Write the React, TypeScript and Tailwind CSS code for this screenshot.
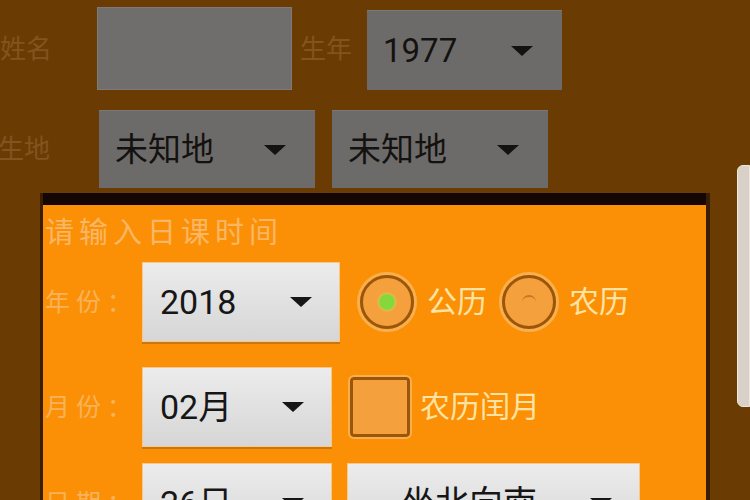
import React from 'react';

const font = { fontFamily: "Roboto, 'Noto Sans CJK SC', sans-serif" };

const Arrow: React.FC<{ className?: string }> = ({ className }) => (
  <svg width="24" height="12" viewBox="0 0 24 12" className={className}>
    <polygon points="1,1 23,1 12,11" fill="currentColor" />
  </svg>
);

const DimSelect: React.FC<{ value: string; className: string }> = ({ value, className }) => (
  <div className={`flex items-center justify-between bg-[#6d6b69] border-t border-[#7b7774] pl-[16px] pr-[28px] text-[#141210] ${className}`}>
    <span className="text-[33px] leading-none">{value}</span>
    <Arrow />
  </div>
);

const Select: React.FC<{ value: string; className: string; center?: boolean }> = ({ value, className, center }) => (
  <div
    className={`flex items-center justify-between bg-gradient-to-b from-[#ececec] to-[#d6d6d6] border border-[#f7c88a] shadow-[0_2px_0_#c9760c] pl-[17px] pr-[26px] text-[#161616] ${className}`}
  >
    <span className={`text-[34px] leading-none ${center ? 'ml-[36px]' : ''}`}>{value}</span>
    <Arrow />
  </div>
);

const Radio: React.FC<{ checked?: boolean }> = ({ checked }) => (
  <div className="w-[60px] h-[60px] rounded-full border-[3px] border-[#f8b04e] flex items-center justify-center shrink-0">
    <div className="w-[54px] h-[54px] rounded-full border-[3px] border-[#9c560c] bg-[#f4a03c] flex items-center justify-center">
      {checked ? (
        <div className="w-[16px] h-[16px] rounded-full bg-[#86d83a] shadow-[0_0_3px_#c8f070]" />
      ) : (
        <div className="w-[14px] h-[14px] rounded-full border-t-2 border-[#b06a1c] opacity-70" />
      )}
    </div>
  </div>
);

const Label: React.FC<{ text: string }> = ({ text }) => (
  <div className="w-[97px] shrink-0 whitespace-nowrap text-[25px] tracking-[6px] text-[#f8b35a] leading-none">{text}</div>
);

export default function App() {
  return (
    <div className="relative w-[750px] h-[500px] overflow-hidden bg-[#6a3c04]" style={font}>
      {/* dimmed form behind the dialog */}
      <div className="flex flex-col pt-[7px]">
        <div className="flex items-center h-[83px]">
          <div className="w-[97px] shrink-0 text-[26px] text-[#82541f] leading-none">姓名</div>
          <div className="w-[195px] h-[83px] bg-[#706e6c] border border-[#7e7a76]" />
          <div className="w-[75px] shrink-0 pl-[8px] text-[26px] text-[#82541f] leading-none">生年</div>
          <DimSelect value="1977" className="w-[195px] h-[80px] mt-[3px]" />
        </div>
        <div className="flex items-center h-[78px] mt-[20px]">
          <div className="w-[99px] shrink-0 text-[26px] text-[#82541f] leading-none whitespace-nowrap">
            <span className="ml-[-28px]">出生地</span>
          </div>
          <DimSelect value="未知地" className="w-[216px] h-[78px]" />
          <DimSelect value="未知地" className="w-[216px] h-[78px] ml-[17px]" />
        </div>
      </div>

      {/* scrollbar of the page behind */}
      <div className="absolute right-0 top-[165px] w-[13px] h-[242px] rounded-l-[6px] bg-[#d9d1c7] border border-[#efe7dc]" />

      {/* dialog */}
      <div className="absolute left-[40px] top-[193px] w-[670px] h-[320px] flex flex-col border-l-[3px] border-r-[4px] border-[#3a1e02]">
        <div className="h-[12px] bg-[#140604] shrink-0" />
        <div className="flex-1 bg-[#fb9006] flex flex-col pl-[2px]">
          <div className="h-[57px] flex items-center text-[29px] tracking-[5px] text-[#f9b765] leading-none">请输入日课时间</div>

          <div className="flex items-center">
            <Label text="年份：" />
            <Select value="2018" className="w-[198px] h-[80px]" />
            <div className="flex items-center ml-[17px]">
              <Radio checked />
              <span className="ml-[10px] text-[30px] text-[#fde3a4] leading-none">公历</span>
            </div>
            <div className="flex items-center ml-[12px]">
              <Radio />
              <span className="ml-[10px] text-[30px] text-[#fde3a4] leading-none">农历</span>
            </div>
          </div>

          <div className="flex items-center mt-[25px]">
            <Label text="月份：" />
            <Select value="02月" className="w-[190px] h-[80px]" />
            <div className="ml-[18px] w-[60px] h-[60px] rounded-[4px] border-[3px] border-[#9c560c] bg-[#f4a03c] outline-2 outline-[#f8b04e]" />
            <span className="ml-[10px] text-[30px] text-[#fde3a4] leading-none">农历闰月</span>
          </div>

          <div className="flex items-center mt-[16px]">
            <Label text="日期：" />
            <Select value="26日" className="w-[190px] h-[80px]" />
            <Select value="坐北向南" center className="w-[293px] h-[80px] ml-[15px]" />
          </div>
        </div>
      </div>
    </div>
  );
}
